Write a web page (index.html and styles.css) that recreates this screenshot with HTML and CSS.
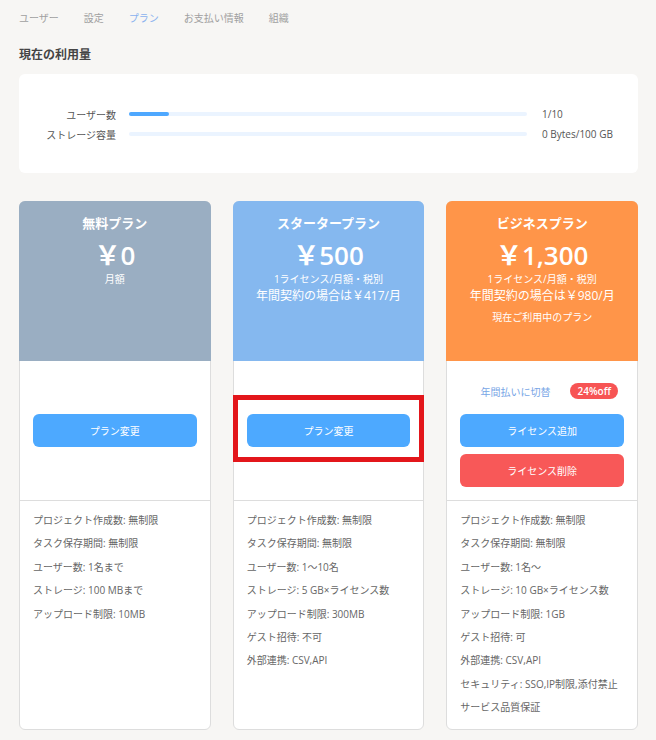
FILE: index.html
```html
<!DOCTYPE html>
<html lang="ja">
  <head>
    <meta charset="UTF-8" />
    <meta name="viewport" content="width=device-width, initial-scale=1.0" />
    <title>プラン</title>
    <link rel="stylesheet" href="styles.css">
  </head>
  <body>
    <div class="page">
      <nav class="tabs">
        <a class="tab">ユーザー</a>
        <a class="tab">設定</a>
        <a class="tab active">プラン</a>
        <a class="tab">お支払い情報</a>
        <a class="tab">組織</a>
      </nav>

      <h2 class="section-title">現在の利用量</h2>

      <div class="usage">
        <div class="usage-row">
          <span class="usage-label">ユーザー数</span>
          <div class="bar"><div class="bar-fill" style="width: 10%"></div></div>
          <span class="usage-value">1/10</span>
        </div>
        <div class="usage-row">
          <span class="usage-label">ストレージ容量</span>
          <div class="bar"><div class="bar-fill" style="width: 0%"></div></div>
          <span class="usage-value">0 Bytes/100 GB</span>
        </div>
      </div>

      <div class="plans">
        <div class="plan">
          <div class="plan-head free">
            <div class="plan-name">無料プラン</div>
            <div class="plan-price">￥0</div>
            <div class="plan-note">月額</div>
          </div>
          <div class="plan-actions">
            <div class="switch"></div>
            <button class="btn btn-blue">プラン変更</button>
          </div>
          <ul class="features">
            <li>プロジェクト作成数: 無制限</li>
            <li>タスク保存期間: 無制限</li>
            <li>ユーザー数: 1名まで</li>
            <li>ストレージ: 100 MBまで</li>
            <li>アップロード制限: 10MB</li>
          </ul>
        </div>

        <div class="plan">
          <div class="plan-head starter">
            <div class="plan-name">スタータープラン</div>
            <div class="plan-price">￥500</div>
            <div class="plan-note">1ライセンス/月額・税別</div>
            <div class="plan-annual">年間契約の場合は￥417/月</div>
          </div>
          <div class="plan-actions">
            <div class="switch"></div>
            <div class="highlight">
              <button class="btn btn-blue">プラン変更</button>
            </div>
          </div>
          <ul class="features">
            <li>プロジェクト作成数: 無制限</li>
            <li>タスク保存期間: 無制限</li>
            <li>ユーザー数: 1〜10名</li>
            <li>ストレージ: 5 GB×ライセンス数</li>
            <li>アップロード制限: 300MB</li>
            <li>ゲスト招待: 不可</li>
            <li>外部連携: CSV,API</li>
          </ul>
        </div>

        <div class="plan">
          <div class="plan-head business">
            <div class="plan-name">ビジネスプラン</div>
            <div class="plan-price">￥1,300</div>
            <div class="plan-note">1ライセンス/月額・税別</div>
            <div class="plan-annual">年間契約の場合は￥980/月</div>
            <div class="plan-current">現在ご利用中のプラン</div>
          </div>
          <div class="plan-actions">
            <div class="switch">
              <a class="switch-link">年間払いに切替</a>
              <span class="badge">24%off</span>
            </div>
            <button class="btn btn-blue">ライセンス追加</button>
            <button class="btn btn-red">ライセンス削除</button>
          </div>
          <ul class="features">
            <li>プロジェクト作成数: 無制限</li>
            <li>タスク保存期間: 無制限</li>
            <li>ユーザー数: 1名～</li>
            <li>ストレージ: 10 GB×ライセンス数</li>
            <li>アップロード制限: 1GB</li>
            <li>ゲスト招待: 可</li>
            <li>外部連携: CSV,API</li>
            <li>セキュリティ: SSO,IP制限,添付禁止</li>
            <li>サービス品質保証</li>
          </ul>
        </div>
      </div>
    </div>
  </body>
</html>
```

FILE: styles.css
```css
body {
  font-family: "Open Sans", "Noto Sans CJK JP", sans-serif;
  background-color: #f7f6f4;
  margin: 0;
  color: #555;
}
.page {
  padding: 11px 18px 20px 19px;
}
.tabs {
  display: flex;
  gap: 25px;
  font-size: 10px;
  line-height: 14px;
}
.tab {
  color: #a0a0a0;
}
.tab.active {
  color: #8ab2ef;
}
.section-title {
  margin: 22px 0 11px;
  font-size: 12px;
  line-height: 16px;
  font-weight: 700;
  color: #444;
}
.usage {
  background: #fff;
  border-radius: 6px;
  padding: 30px 13px 29px 20px;
}
.usage-row {
  display: grid;
  grid-template-columns: 77px 1fr 84px;
  column-gap: 13px;
  align-items: center;
  height: 20px;
  font-size: 10px;
  color: #555;
}
.usage-row .usage-value {
  margin-left: 1px;
}
.usage-label {
  text-align: right;
}
.bar {
  height: 4px;
  border-radius: 2px;
  background: #ebf4ff;
  margin-right: 1px;
}
.bar-fill {
  height: 100%;
  border-radius: 2px;
  background: #4ea8ff;
}
.plans {
  margin-top: 28px;
  display: grid;
  grid-template-columns: repeat(3, 1fr);
  gap: 22px;
}
.plan {
  background: #fff;
  border: 1px solid #ddd;
  border-radius: 6px;
  display: flex;
  flex-direction: column;
}
.plan-head {
  height: 160px;
  box-sizing: border-box;
  padding-top: 12px;
  margin: -1px -1px 0;
  border-radius: 6px 6px 0 0;
  color: #fff;
  text-align: center;
}
.plan-head.free {
  background: #9aaec2;
}
.plan-head.starter {
  background: #85b8ef;
}
.plan-head.business {
  background: #ff9549;
}
.plan-name {
  font-size: 13px;
  line-height: 20px;
  font-weight: 600;
}
.plan-price {
  margin-top: 6px;
  font-size: 26px;
  line-height: 32px;
  font-weight: 600;
}
.plan-note {
  margin-top: 1px;
  font-size: 10px;
  line-height: 14px;
}
.plan-annual {
  margin-top: 2px;
  font-size: 12px;
  line-height: 16px;
}
.plan-current {
  margin-top: 6px;
  font-size: 10px;
  line-height: 14px;
}
.plan-actions {
  height: 140px;
  box-sizing: border-box;
  padding: 22px 13px 0;
  border-bottom: 1px solid #ddd;
  display: flex;
  flex-direction: column;
  gap: 7px;
}
.switch {
  height: 16px;
  margin-bottom: 8px;
  padding-left: 14px;
  display: flex;
  justify-content: center;
  align-items: center;
  gap: 20px;
  font-size: 10px;
}
.switch-link {
  color: #78a6e6;
}
.badge {
  background: #f75454;
  color: #fff;
  border-radius: 8px;
  padding: 0 7px;
  line-height: 16px;
  font-weight: 600;
}
.btn {
  width: 100%;
  height: 33px;
  border: none;
  border-radius: 6px;
  color: #fff;
  font-family: inherit;
  font-size: 10px;
  cursor: pointer;
}
.btn-blue {
  background: #4da9ff;
}
.btn-red {
  background: #f85858;
}
.highlight {
  position: relative;
}
.highlight::after {
  content: "";
  position: absolute;
  top: -19px;
  bottom: -15px;
  left: -14px;
  right: -14px;
  border: 5px solid #e3161b;
}
.features {
  list-style: none;
  margin: 0;
  padding: 8px 13px 9px;
  font-size: 10px;
  line-height: 23.4px;
  color: #666;
}
```
